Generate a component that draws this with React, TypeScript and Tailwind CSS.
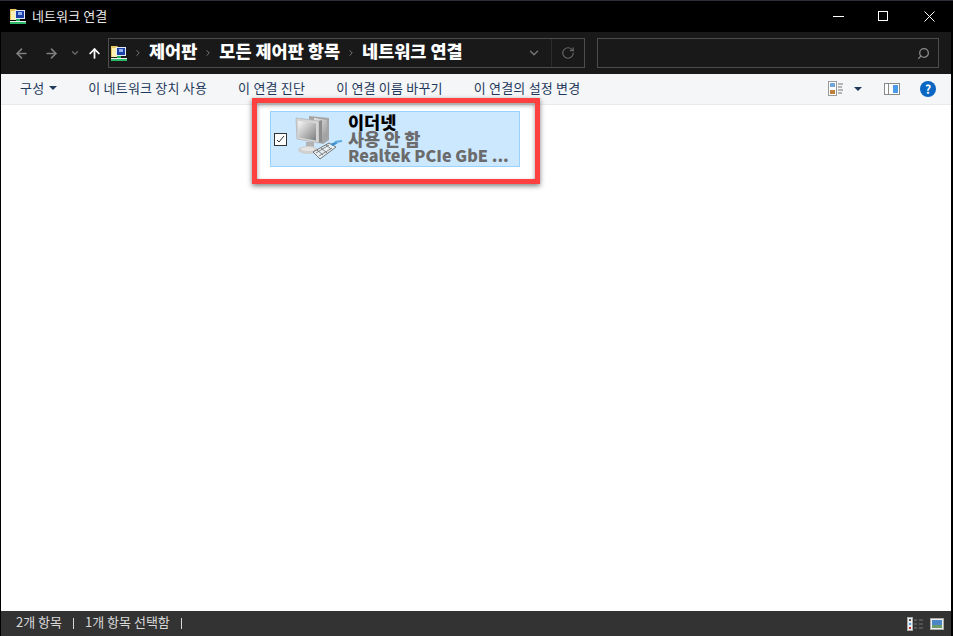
import React from 'react';
import { ArrowLeft, ArrowRight, ArrowUp, ChevronDown, ChevronRight, RotateCw, Search } from 'lucide-react';

const FONT = "font-['Noto_Sans_CJK_KR','Noto_Sans',sans-serif]";

// small control panel network folder icon
const NetFolderIcon = () => (
  <svg width="16" height="17" viewBox="0 0 16 17" className="shrink-0">
    <path d="M0 1h6l1 1h2v10H0z" fill="#e8c860" />
    <path d="M1 3h7v9H1z" fill="#fdf0b0" />
    <rect x="5" y="2" width="10" height="9" fill="#e4ecf8" />
    <rect x="6" y="3" width="8" height="7" fill="#1c3fa8" />
    <rect x="8" y="4" width="4" height="3" fill="#8fb2ec" />
    <rect x="6" y="11" width="4" height="3" fill="#23b35a" />
    <rect x="0" y="13" width="16" height="1" fill="#f0f0f0" />
    <rect x="0" y="14" width="16" height="2" fill="#2fb868" />
  </svg>
);

const ToolbarItem = ({ label }: { label: string }) => (
  <span className="text-[13px] leading-none tracking-[0.2px] text-[#1e395b] whitespace-nowrap">{label}</span>
);

const Crumb = ({ label }: { label: string }) => (
  <>
    <ChevronRight size={10} strokeWidth={2.4} className="mx-[6px] shrink-0 text-[#777]" />
    <span className="-mt-[5px] text-[17.5px] font-black leading-none text-white whitespace-nowrap">{label}</span>
  </>
);

const EthernetIcon = () => (
  <svg width="48" height="45" viewBox="0 0 48 45" className="-mt-[4px] shrink-0">
    <defs>
      <linearGradient id="scr" x1="0" y1="0" x2="1" y2="1">
        <stop offset="0" stopColor="#fafafa" />
        <stop offset="1" stopColor="#7e7e7e" />
      </linearGradient>
      <linearGradient id="scr2" x1="0" y1="0" x2="1" y2="1">
        <stop offset="0" stopColor="#e8e8e8" />
        <stop offset="1" stopColor="#999" />
      </linearGradient>
    </defs>
    {/* back monitor */}
    <path d="M15 1l20 2v22l-6 4-14-4z" fill="#a5a5a5" />
    <path d="M20 3l13 2v17l-13-2z" fill="url(#scr2)" />
    {/* front monitor */}
    <path d="M2 3l23 3v22L3 24z" fill="#d4d4d4" stroke="#b5b5b5" strokeWidth="0.8" />
    <path d="M4 6l18 2.5v17L5 22.5z" fill="url(#scr)" />
    <path d="M25 6l3-1v22l-3 1z" fill="#8c8c8c" />
    <path d="M12 27h8v6h-8z" fill="#b2b2b2" />
    <ellipse cx="14" cy="35" rx="10" ry="4" fill="#cfcfcf" />
    <ellipse cx="14" cy="34" rx="7" ry="2" fill="#e4e4e4" />
    {/* plug */}
    <path d="M19 37l16-9 7 4-16 12z" fill="#e6eef2" stroke="#666" strokeWidth="0.9" />
    <path d="M22 38l13-8M25 41l13-8M23 35l6 5M27 33l6 5M32 30l5 4" stroke="#6a6a6a" strokeWidth="0.8" fill="none" />
    <path d="M36 29l5-2 3 1-5 3z" fill="#3f8fd0" />
    <path d="M41 27l7-1" stroke="#59a8e0" strokeWidth="2" />
  </svg>
);

const App: React.FC = () => {
  return (
    <div className={`${FONT} relative flex h-[636px] w-[953px] flex-col overflow-hidden bg-black`}>
      {/* Title bar */}
      <div className="h-px shrink-0 bg-[#2e2e38]" />
      <div className="flex h-[30px] shrink-0 items-center justify-between pl-[10px]">
        <div className="flex items-center gap-[6px]">
          <NetFolderIcon />
          <span className="text-[13px] tracking-[0.1px] text-[#e8e8e8]">네트워크 연결</span>
        </div>
        <div className="flex items-center pr-[18px] text-white">
          <svg width="11" height="11" viewBox="0 0 11 11"><path d="M0 5.5h11" stroke="#fff" /></svg>
          <svg width="10" height="10" viewBox="0 0 10 10" className="ml-[34px]"><rect x="0.5" y="0.5" width="9" height="9" fill="none" stroke="#fff" /></svg>
          <svg width="11" height="11" viewBox="0 0 11 11" className="ml-[36px]"><path d="M0.5 0.5l10 10M10.5 0.5l-10 10" stroke="#fff" /></svg>
        </div>
      </div>
      <div className="h-px shrink-0 bg-black" />

      {/* Address bar */}
      <div className="ml-[1px] mr-[2px] flex h-[42px] shrink-0 items-center bg-[#191919]">
        <div className="flex w-[107px] items-center pl-[13px] text-[#808080]">
          <ArrowLeft size={15} strokeWidth={2.6} />
          <ArrowRight size={15} strokeWidth={2.6} className="ml-[15px]" />
          <ChevronDown size={10} strokeWidth={3.4} className="ml-[11px] text-[#666]" />
          <ArrowUp size={15} strokeWidth={2.8} className="ml-[7px] text-white" />
        </div>
        <div className="flex h-[30px] w-[477px] items-center border border-[#4d4d4d] pl-[2px]">
          <NetFolderIcon />
          <Crumb label="제어판" />
          <Crumb label="모든 제어판 항목" />
          <Crumb label="네트워크 연결" />
          <div className="ml-auto flex h-full items-center">
            <ChevronDown size={14} strokeWidth={2.4} className="mr-[10px] text-[#777]" />
            <div className="flex h-full w-[33px] items-center justify-center border-l border-[#2c2c2c]">
              <RotateCw size={14} strokeWidth={2} className="text-[#666]" />
            </div>
          </div>
        </div>
        <div className="ml-[12px] flex h-[30px] w-[342px] items-center justify-end border border-[#4d4d4d] pr-[8px]">
          <Search size={13} strokeWidth={2.4} className="-scale-x-100 text-[#8a8a8a]" />
        </div>
      </div>

      {/* Command bar */}
      <div className="ml-[1px] mr-[2px] flex h-[31px] shrink-0 items-center border-b border-[#e8eaec] bg-[#f5f6f7]">
        <div className="-mt-[3px] flex items-center pl-[19px]">
          <ToolbarItem label="구성" />
          <span className="ml-[5px] h-0 w-0 border-x-[4px] border-t-[4px] border-x-transparent border-t-[#1e395b]" />
        </div>
        <div className="-mt-[3px] ml-[31px] flex items-center gap-[31px]">
          <ToolbarItem label="이 네트워크 장치 사용" />
          <ToolbarItem label="이 연결 진단" />
          <ToolbarItem label="이 연결 이름 바꾸기" />
          <ToolbarItem label="이 연결의 설정 변경" />
        </div>
        <div className="ml-auto flex items-center pr-[15px]">
          <svg width="16" height="16" viewBox="0 0 16 16">
            <rect x="0.5" y="0.5" width="8" height="14" fill="#fff" stroke="#9a9a9a" />
            <rect x="2" y="2" width="5" height="4" fill="#6fa8d8" />
            <rect x="2" y="9" width="5" height="4" fill="#c0803a" />
            <path d="M10 3h5M10 6h4M10 9h5M10 12h4" stroke="#777" />
          </svg>
          <span className="ml-[10px] h-0 w-0 border-x-[4px] border-t-[4px] border-x-transparent border-t-[#1e395b]" />
          <svg width="16" height="12" viewBox="0 0 16 12" className="ml-[22px]">
            <rect x="0.5" y="0.5" width="15" height="11" fill="#fff" stroke="#8a8a8a" />
            <rect x="9" y="2" width="5" height="8" fill="#4a9be8" />
            <rect x="4" y="1" width="1" height="10" fill="#8a8a8a" />
          </svg>
          <span className="ml-[20px] flex h-[16px] w-[16px] items-center justify-center rounded-full bg-[#0a66c2] text-[12px] font-bold leading-none text-white">?</span>
        </div>
      </div>

      {/* Content */}
      <div className="relative ml-[1px] mr-[2px] flex-1 bg-white">
        <div className="absolute left-[269px] top-[6px] flex h-[56px] w-[250px] items-center border border-[#99d1ff] bg-[#cce8ff]">
          <span className="ml-[3px] flex h-[13px] w-[13px] shrink-0 items-center justify-center border border-[#333] bg-white">
            <svg width="9" height="9" viewBox="0 0 9 9"><path d="M1 5l2 2 5-6" fill="none" stroke="#333" strokeWidth="1" /></svg>
          </span>
          <div className="ml-[7px] flex"><EthernetIcon /></div>
          <div className="-mt-[2px] ml-[6px] flex flex-col text-[17.5px] font-black leading-[17px]">
            <span className="text-black">이더넷</span>
            <span className="text-[#6b6b6b]">사용 안 함</span>
            <span className="whitespace-nowrap text-[16.2px] text-[#6b6b6b]">Realtek PCIe GbE ...</span>
          </div>
        </div>
      </div>

      {/* Status bar */}
      <div className="ml-[1px] mr-[2px] flex h-[25px] shrink-0 items-center bg-[#333333] pl-[15px] text-[13px] text-[#d8d8d8]">
        <span className="-mt-[3px]">2개 항목</span>
        <span className="ml-[11px] h-[11px] w-px bg-[#d8d8d8]" />
        <span className="-mt-[3px] ml-[11px]">1개 항목 선택함</span>
        <span className="ml-[11px] h-[11px] w-px bg-[#d8d8d8]" />
        <div className="ml-auto flex items-center gap-[7px] pr-[7px]">
          <svg width="16" height="14" viewBox="0 0 16 14">
            <rect x="0.5" y="0.5" width="5" height="13" fill="#eee" stroke="#aaa" />
            <rect x="2" y="2" width="2" height="2" fill="#555" />
            <rect x="2" y="6" width="2" height="2" fill="#4a9be8" />
            <rect x="2" y="10" width="2" height="2" fill="#b33" />
            <path d="M7 3h3M12 3h4M7 7h3M12 7h4M7 11h3M12 11h4" stroke="#777" />
          </svg>
          <svg width="14" height="12" viewBox="0 0 14 12">
            <rect x="0.5" y="0.5" width="13" height="11" fill="#eee" stroke="#aaa" />
            <rect x="2" y="2" width="10" height="6" fill="#4a86c8" />
            <rect x="2" y="7" width="10" height="3" fill="#6b9a6b" />
          </svg>
        </div>
      </div>

      {/* Red annotation */}
      <div className="absolute left-[252px] top-[98px] h-[86px] w-[288px] border-[5px] border-[#ff4040] shadow-[0_2px_5px_rgba(0,0,0,0.5),inset_0_2px_4px_rgba(0,0,0,0.4)]" />
    </div>
  );
};

export default App;
